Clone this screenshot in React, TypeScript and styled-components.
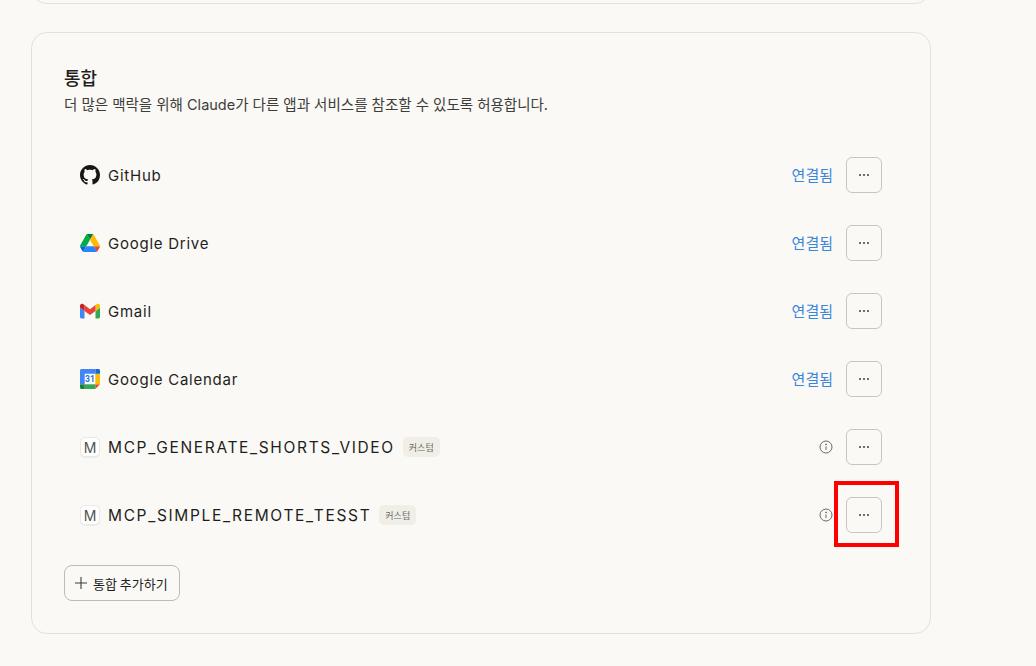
import React from 'react'
import styled, { createGlobalStyle } from 'styled-components'

const GlobalStyle = createGlobalStyle`
    html, body {
        margin: 0;
        padding: 0;
        background-color: #faf9f5;
        color: #1f1e1d;
        font-family: Inter, "Noto Sans CJK KR", sans-serif;
    }
`

const Page = styled.main`
    width: 900px;
    height: 666px;
    margin-left: 31px;
    overflow: hidden;
`

const PrevCardClip = styled.div`
    height: 4px;
    display: flex;
    align-items: flex-end;
    overflow: hidden;
    margin-bottom: 28px;
`

const PrevCard = styled.div`
    flex: none;
    box-sizing: border-box;
    width: 100%;
    height: 40px;
    border: 1px solid #e3e1da;
    border-radius: 16px;
`

const Card = styled.section`
    box-sizing: border-box;
    height: 602px;
    padding: 30px 32px 32px 32px;
    border: 1px solid #e3e1da;
    border-radius: 16px;
`

const Title = styled.h2`
    margin: 0 0 4px;
    font-size: 18px;
    line-height: 28px;
    font-weight: 500;
    font-family: "Noto Sans CJK KR", sans-serif;
`

const Subtitle = styled.p`
    margin: 0 0 42px;
    font-size: 14.5px;
    line-height: 20px;
    color: #3d3d3a;
    font-family: Inter, "Noto Sans CJK KR", sans-serif;
`

const List = styled.ul`
    list-style: none;
    margin: 0;
    padding: 0 16px;
    display: flex;
    flex-direction: column;
    gap: 32px;
`

const Row = styled.li`
    height: 36px;
    display: flex;
    align-items: center;
    justify-content: space-between;
`

const RowLeft = styled.div`
    display: flex;
    align-items: center;
`

const IconSlot = styled.span`
    width: 20px;
    height: 20px;
    margin-right: 8px;
    flex: none;
    display: flex;
    align-items: center;
    justify-content: center;
`

const Letter = styled.span`
    box-sizing: border-box;
    width: 20px;
    height: 20px;
    display: flex;
    align-items: center;
    justify-content: center;
    background-color: #fff;
    border: 1px solid #ebe9e3;
    border-radius: 5px;
    box-shadow: 0 1px 1px rgba(0, 0, 0, 0.06);
    font-size: 14px;
    color: #55534e;
`

const Name = styled.span<{ $caps?: boolean }>`
    font-size: ${(props) => (props.$caps ? '15.5px' : '15px')};
    letter-spacing: ${(props) => (props.$caps ? '1.65px' : '0.75px')};
    color: #1f1e1d;
`

const Badge = styled.span`
    margin-left: 8px;
    height: 20px;
    padding: 0 6px;
    display: flex;
    align-items: center;
    background-color: #f0eee7;
    border-radius: 5px;
    font-size: 9px;
    color: #6b6a65;
    font-family: "Noto Sans CJK KR", sans-serif;
`

const RowRight = styled.div`
    display: flex;
    align-items: center;
    gap: 13px;
`

const Connected = styled.span`
    padding-bottom: 2px;
    font-size: 15px;
    color: #3a86dc;
    font-family: "Noto Sans CJK KR", sans-serif;
`

const InfoIcon = styled.svg`
    width: 14px;
    height: 14px;
    color: #6b6a65;
`

const MoreWrap = styled.div`
    position: relative;
    width: 36px;
    height: 36px;
`

const MoreButton = styled.button`
    box-sizing: border-box;
    width: 36px;
    height: 36px;
    padding: 0;
    display: flex;
    align-items: center;
    justify-content: center;
    gap: 2px;
    background: transparent;
    border: 1px solid #c8c6bf;
    border-radius: 6px;
`

const Dot = styled.i`
    width: 2px;
    height: 2px;
    border-radius: 50%;
    background-color: #3d3d3a;
`

const Highlight = styled.div`
    position: absolute;
    top: -16px;
    left: -12px;
    width: 65px;
    height: 66px;
    box-sizing: border-box;
    border: 4px solid #ff0000;
    pointer-events: none;
`

const AddButton = styled.button`
    box-sizing: border-box;
    margin-top: 32px;
    width: 116px;
    height: 36px;
    padding: 0 0 0 9px;
    display: flex;
    align-items: center;
    gap: 5px;
    background: transparent;
    border: 1px solid #bdbbb4;
    border-radius: 8px;
    font-size: 13px;
    color: #1f1e1d;
    font-family: "Noto Sans CJK KR", sans-serif;
`

const GitHubIcon = () => (
    <svg width='20' height='20' viewBox='0 0 16 16' fill='#161614'>
        <path d='M8 0C3.58 0 0 3.58 0 8c0 3.54 2.29 6.53 5.47 7.59.4.07.55-.17.55-.38 0-.19-.01-.82-.01-1.49-2.01.37-2.53-.49-2.69-.94-.09-.23-.48-.94-.82-1.13-.28-.15-.68-.52-.01-.53.63-.01 1.08.58 1.23.82.72 1.21 1.87.87 2.33.66.07-.52.28-.87.51-1.07-1.78-.2-3.64-.89-3.64-3.95 0-.87.31-1.59.82-2.15-.08-.2-.36-1.02.08-2.12 0 0 .67-.21 2.2.82.64-.18 1.32-.27 2-.27s1.36.09 2 .27c1.53-1.04 2.2-.82 2.2-.82.44 1.1.16 1.92.08 2.12.51.56.82 1.27.82 2.15 0 3.07-1.87 3.75-3.65 3.95.29.25.54.73.54 1.48 0 1.07-.01 1.93-.01 2.2 0 .21.15.46.55.38A8.01 8.01 0 0 0 16 8c0-4.42-3.58-8-8-8z' />
    </svg>
)

const DriveIcon = () => (
    <svg width='20' height='18' viewBox='0 0 87.3 78'>
        <path d='m6.6 66.85 3.85 6.65c.8 1.4 1.95 2.5 3.3 3.3l13.75-23.8H0c0 1.55.4 3.1 1.2 4.5z' fill='#0066da' />
        <path d='M43.65 25 29.9 1.2c-1.35.8-2.5 1.9-3.3 3.3L1.2 48.5A9 9 0 0 0 0 53h27.5z' fill='#00ac47' />
        <path d='M73.55 76.8c1.35-.8 2.5-1.9 3.3-3.3l1.6-2.75 7.65-13.25c.8-1.4 1.2-2.95 1.2-4.5H59.8l5.85 11.5z' fill='#ea4335' />
        <path d='M43.65 25 57.4 1.2C56.05.4 54.5 0 52.9 0H34.4c-1.6 0-3.15.45-4.5 1.2z' fill='#00832d' />
        <path d='M59.8 53H27.5L13.75 76.8c1.35.8 2.9 1.2 4.5 1.2h50.8c1.6 0 3.15-.45 4.5-1.2z' fill='#2684fc' />
        <path d='M73.4 26.5 60.7 4.5c-.8-1.4-1.95-2.5-3.3-3.3L43.65 25 59.8 53h27.45c0-1.55-.4-3.1-1.2-4.5z' fill='#ffba00' />
    </svg>
)

const GmailIcon = () => (
    <svg width='20' height='16' viewBox='0 0 20 15'>
        <path d='M1.4 15h3.1V7.5L0 4.1v9.5C0 14.4.6 15 1.4 15z' fill='#4285f4' />
        <path d='M15.5 15h3.1c.8 0 1.4-.6 1.4-1.4V4.1l-4.5 3.4z' fill='#34a853' />
        <path d='M15.5 1.6v5.9L20 4.1V2.3c0-1.7-1.9-2.6-3.3-1.6z' fill='#fbbc04' />
        <path d='M4.5 7.5V1.6L10 5.7l5.5-4.1v5.9L10 11.6z' fill='#ea4335' />
        <path d='M0 2.3v1.8l4.5 3.4V1.6L3.3.7C1.9-.3 0 .6 0 2.3z' fill='#c5221f' />
    </svg>
)

const CalendarIcon = () => (
    <svg width='20' height='20' viewBox='0 0 20 20'>
        <path d='M15.3 4.7H4.7v10.6h10.6z' fill='#fff' />
        <path d='M15.3 20 20 15.3h-4.7z' fill='#ea4335' />
        <path d='M20 4.7h-4.7v10.6H20z' fill='#fbbc04' />
        <path d='M15.3 15.3H4.7V20h10.6z' fill='#34a853' />
        <path d='M0 15.3v3.2C0 19.3.7 20 1.5 20h3.2v-4.7z' fill='#188038' />
        <path d='M20 4.7V1.5C20 .7 19.3 0 18.5 0h-3.2v4.7z' fill='#1967d2' />
        <path d='M15.3 0H1.5C.7 0 0 .7 0 1.5v13.8h4.7V4.7h10.6z' fill='#4285f4' />
        <text x='10' y='13.4' textAnchor='middle' fontSize='8.6' fontWeight='700' fill='#1a73e8' fontFamily='Roboto, sans-serif'>31</text>
    </svg>
)

const Info = () => (
    <InfoIcon viewBox='0 0 14 14' fill='none' stroke='currentColor' strokeWidth='1'>
        <circle cx='7' cy='7' r='6' />
        <path d='M7 6.4v3.6' />
        <circle cx='7' cy='4.4' r='0.5' fill='currentColor' />
    </InfoIcon>
)

const More = ({ marked }: { marked?: boolean }): JSX.Element => (
    <MoreWrap>
        <MoreButton aria-label='more'>
            <Dot />
            <Dot />
            <Dot />
        </MoreButton>
        {marked && <Highlight />}
    </MoreWrap>
)

const services = [
    { name: 'GitHub', icon: <GitHubIcon /> },
    { name: 'Google Drive', icon: <DriveIcon /> },
    { name: 'Gmail', icon: <GmailIcon /> },
    { name: 'Google Calendar', icon: <CalendarIcon /> },
]

const customs = ['MCP_GENERATE_SHORTS_VIDEO', 'MCP_SIMPLE_REMOTE_TESST']

const App = (): JSX.Element => (
    <Page>
        <GlobalStyle />
        <PrevCardClip>
            <PrevCard />
        </PrevCardClip>
        <Card>
            <Title>통합</Title>
            <Subtitle>더 많은 맥락을 위해 Claude가 다른 앱과 서비스를 참조할 수 있도록 허용합니다.</Subtitle>
            <List>
                {services.map((service) => (
                    <Row key={service.name}>
                        <RowLeft>
                            <IconSlot>{service.icon}</IconSlot>
                            <Name>{service.name}</Name>
                        </RowLeft>
                        <RowRight>
                            <Connected>연결됨</Connected>
                            <More />
                        </RowRight>
                    </Row>
                ))}
                {customs.map((name, i) => (
                    <Row key={name}>
                        <RowLeft>
                            <IconSlot>
                                <Letter>M</Letter>
                            </IconSlot>
                            <Name $caps>{name}</Name>
                            <Badge>커스텀</Badge>
                        </RowLeft>
                        <RowRight>
                            <Info />
                            <More marked={i === 1} />
                        </RowRight>
                    </Row>
                ))}
            </List>
            <AddButton>
                <svg width='14' height='14' viewBox='0 0 14 14' stroke='#3d3d3a' strokeWidth='1.1'>
                    <path d='M7 1v12M1 7h12' />
                </svg>
                통합 추가하기
            </AddButton>
        </Card>
    </Page>
)

export default App
